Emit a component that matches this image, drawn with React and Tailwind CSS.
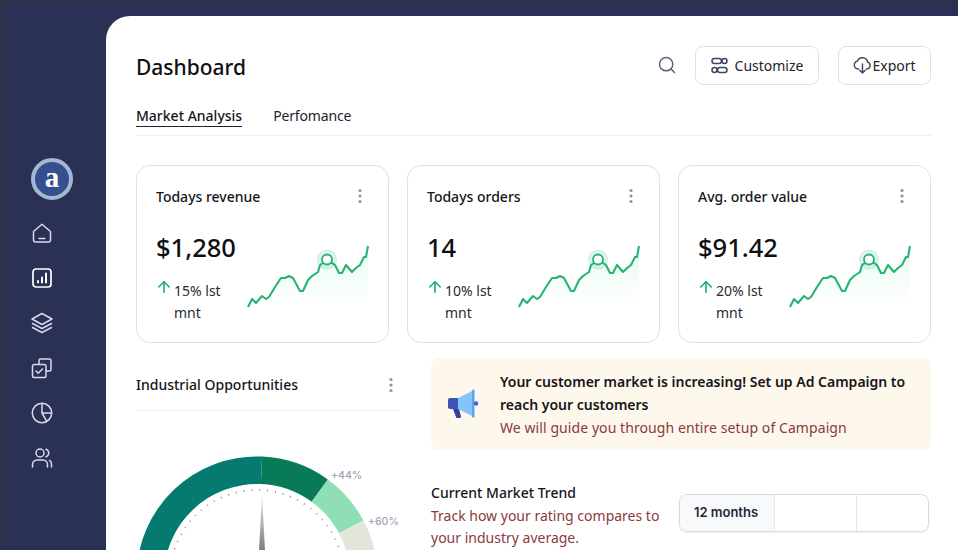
import { Search, ArrowUp } from "lucide-react";

const sparkPoints =
  "8,72 12,64 16,68 22,61 26,64 29,62 35,52 41,43 45,43 49,41 53,43 60,56 63,56 68,45 72,41 78,37 80,30 83,28 87,25 92,28 95,30 99,38 102,38 106,30 112,37 116,33 120,30 124,22 126,22 128,11";

const cards = [
  { title: "Todays revenue", value: "$1,280", delta: "15%" },
  { title: "Todays orders", value: "14", delta: "10%" },
  { title: "Avg. order value", value: "$91.42", delta: "20%" },
];

function polar(r, deg) {
  const a = (deg * Math.PI) / 180;
  return [121 + r * Math.sin(a), 166 - r * Math.cos(a)];
}

function arc(from, to) {
  const [x1, y1] = polar(120.5, from);
  const [x2, y2] = polar(120.5, to);
  const [x3, y3] = polar(93, to);
  const [x4, y4] = polar(93, from);
  return `M${x1} ${y1}A120.5 120.5 0 0 1 ${x2} ${y2}L${x3} ${y3}A93 93 0 0 0 ${x4} ${y4}Z`;
}

function Gauge() {
  const ticks = [];
  for (let d = -84; d <= 84; d += 5.2) ticks.push(d);
  return (
    <svg width="264" height="139" viewBox="0 0 264 139" className="block">
      <defs>
        <linearGradient id="needle" x1="0" y1="0" x2="0" y2="1">
          <stop offset="0" stopColor="#e5e6ea" />
          <stop offset="1" stopColor="#7d7f86" />
        </linearGradient>
      </defs>
      <path d={arc(-90, 2.4)} fill="#047a70" />
      <path d={arc(2.4, 36)} fill="#087a58" />
      <path d={arc(36, 62)} fill="#8fdfb5" />
      <path d={arc(62, 90)} fill="#e1e5da" />
      {ticks.map((d) => {
        const [x1, y1] = polar(88, d + 2.6);
        const [x2, y2] = polar(86, d + 2.6);
        return <line key={d} x1={x1} y1={y1} x2={x2} y2={y2} stroke="#8d9098" strokeWidth="1" />;
      })}
      <polygon points="126,84 123,139 129,139" fill="url(#needle)" />
      <text x="195" y="68" fontSize="10.5" fontFamily="Inter" fontWeight="500" fill="#a0a4b4">+44%</text>
      <text x="232" y="114" fontSize="10.5" fontFamily="Inter" fontWeight="500" fill="#a0a4b4">+60%</text>
    </svg>
  );
}

function Dots() {
  return (
    <svg width="4" height="16" viewBox="0 0 4 16" className="block">
      <circle cx="2" cy="2.5" r="1.6" fill="#8f93a8" />
      <circle cx="2" cy="8" r="1.6" fill="#8f93a8" />
      <circle cx="2" cy="13.5" r="1.6" fill="#8f93a8" />
    </svg>
  );
}

function Sparkline({ id }) {
  return (
    <svg width="130" height="80" viewBox="0 0 130 80" className="block shrink-0">
      <defs>
        <linearGradient id={id} x1="0" y1="0" x2="0" y2="1">
          <stop offset="0" stopColor="#e2f9ec" />
          <stop offset="1" stopColor="#ffffff" />
        </linearGradient>
      </defs>
      <polygon points={`${sparkPoints} 128,68 8,72`} fill={`url(#${id})`} opacity="0.75" />
      <polyline points={sparkPoints} fill="none" stroke="#25b473" strokeWidth="2.1" strokeLinejoin="round" />
      <circle cx="87" cy="24.500" r="9.500" fill="#25b473" fillOpacity="0.14" stroke="#25b473" strokeOpacity="0.18" />
      <circle cx="87" cy="24.500" r="5" fill="#fff" stroke="#25b473" strokeWidth="1.8" />
    </svg>
  );
}

function StatCard({ title, value, delta, id }) {
  return (
    <div className="h-[178px] rounded-[14px] border border-[#dfe1e8] pl-[19px] pr-[19px] pt-[19px]">
      <div className="flex h-[22px] items-center justify-between pr-[7px]">
        <span className="text-[14px] font-medium text-[#15151a]">{title}</span>
        <Dots />
      </div>
      <div className="flex justify-between">
        <div className="w-[90px] pt-[20px]">
          <div className="text-[25.500px] font-medium leading-[40px] text-[#0f0f14]">{value}</div>
          <div className="mt-[13px] flex text-[14px] leading-[22px] text-[#2b2b33]">
            <ArrowUp size={18} strokeWidth={2.1} className="mt-[-2px] ml-[-1px] mr-[1px] shrink-0 text-[#17ad6b]" />
            <div className="w-[60px]">
              <div>{delta} lst</div>
              <div>mnt</div>
            </div>
          </div>
        </div>
        <div className="mr-[-1px] mt-[28px]">
          <Sparkline id={id} />
        </div>
      </div>
    </div>
  );
}

function NavIcons() {
  const cls = "block";
  return (
    <div className="ml-[29px] mt-[21px] flex flex-col gap-[21px] text-[#d5daea]">
      <svg className={cls} width="24" height="24" viewBox="0 0 24 24" fill="none" stroke="currentColor" strokeWidth="1.5" strokeLinejoin="round" strokeLinecap="round">
        <path d="M3.500 10.500 12 3.200l8.500 7.300V19a2 2 0 0 1-2 2h-13a2 2 0 0 1-2-2z" />
        <path d="M9 17.500h6" />
      </svg>
      <svg className={cls} width="24" height="24" viewBox="0 0 24 24" fill="none" stroke="#ffffff" strokeWidth="1.7" strokeLinecap="round">
        <rect x="3" y="3" width="18" height="18" rx="3" />
        <path d="M8 16.500v-1.500M12 16.500v-5M16 16.500v-9" strokeWidth="2" />
      </svg>
      <svg className={cls} width="24" height="24" viewBox="0 0 24 24" fill="none" stroke="currentColor" strokeWidth="1.5" strokeLinejoin="round" strokeLinecap="round">
        <path d="M12 2.500 22 8l-10 5.500L2 8z" />
        <path d="m2.500 12.500 9.500 5 9.500-5" />
        <path d="m2.500 16.500 9.500 5 9.500-5" />
      </svg>
      <svg className={cls} width="24" height="24" viewBox="0 0 24 24" fill="none" stroke="currentColor" strokeWidth="1.5" strokeLinejoin="round" strokeLinecap="round">
        <path d="M9 8V4.500A1.500 1.500 0 0 1 10.500 3h9A1.500 1.500 0 0 1 21 4.500v9a1.500 1.500 0 0 1-1.500 1.500H16" />
        <rect x="2.500" y="8.500" width="13.500" height="13" rx="1.800" />
        <path d="m6 15 2.200 2.200L12.500 13" />
      </svg>
      <svg className={cls} width="24" height="24" viewBox="0 0 24 24" fill="none" stroke="currentColor" strokeWidth="1.5" strokeLinejoin="round" strokeLinecap="round">
        <circle cx="12" cy="12" r="9.700" />
        <path d="M12 2.500V12l4.800 8.300M12 12h9.500" />
      </svg>
      <svg className={cls} width="24" height="24" viewBox="0 0 24 24" fill="none" stroke="currentColor" strokeWidth="1.5" strokeLinejoin="round" strokeLinecap="round">
        <circle cx="10" cy="7" r="4" />
        <path d="M2.500 21v-2.500A4.500 4.500 0 0 1 7 14h6a4.500 4.500 0 0 1 4.500 4.500V21" />
        <path d="M16 3.200a4 4 0 0 1 0 7.600M19.500 14.300a4.500 4.500 0 0 1 2 3.700V21" />
      </svg>
    </div>
  );
}

function Megaphone() {
  return (
    <svg width="32" height="30" viewBox="0 0 32 30" className="block shrink-0">
      <path d="M6 20h6l2 7.500a1.500 1.500 0 0 1-1.500 1.500h-2a1.500 1.500 0 0 1-1.500-1z" fill="#34409b" />
      <rect x="1" y="9" width="11" height="11" rx="2" fill="#3f51b5" />
      <path d="M11 9 25 2v25l-14-7z" fill="#85c4fb" />
      <rect x="25" y="0.500" width="2.500" height="28" rx="1.200" fill="#5aa5ee" />
      <circle cx="29" cy="14.500" r="2.200" fill="#3f64c9" />
    </svg>
  );
}

export default function App() {
  return (
    <div
      className="flex h-[550px] w-[958px] overflow-hidden border-l border-t border-[#333333] bg-[#2a3154] text-[#111116]"
      style={{ fontFamily: '"Noto Sans", sans-serif' }}
    >
      <aside className="w-[105px] shrink-0 pt-[157px]">
        <div className="ml-[30px] flex h-[42px] w-[42px] items-center justify-center rounded-full border-[4px] border-[#a4b8d6] bg-[#36508f]">
          <span className="mt-[-3px] text-[29px] font-bold leading-none text-white" style={{ fontFamily: '"Liberation Serif", serif' }}>a</span>
        </div>
        <NavIcons />
      </aside>

      <main className="mt-[15px] min-w-0 flex-1 rounded-tl-[24px] bg-white pl-[30px] pr-[27px] pt-[30px]">
        <header className="flex h-[40px] items-center justify-between">
          <h1 className="mt-[2px] text-[21px] font-medium leading-none text-[#0f0f14]">Dashboard</h1>
          <div className="mb-[2px] flex items-center">
            <Search size={20} strokeWidth={1.8} className="mr-[18px] text-[#5b6478]" />
            <button className="flex h-[39px] w-[124px] items-center justify-center gap-[7px] rounded-[8px] border border-[#dfe1e8] text-[14px] text-[#23232b]">
              <svg width="17" height="17" viewBox="0 0 17 17" fill="none" stroke="#3d465c" strokeWidth="1.5">
                <rect x="1" y="1.500" width="9.500" height="5" rx="2.500" />
                <circle cx="13.500" cy="4" r="2.500" />
                <circle cx="3.500" cy="13" r="2.500" />
                <rect x="6.500" y="10.500" width="9.500" height="5" rx="2.500" />
              </svg>
              Customize
            </button>
            <button className="ml-[19px] flex h-[39px] w-[93px] items-center justify-center rounded-[8px] border border-[#dfe1e8] text-[14px] text-[#23232b]">
              <svg width="19" height="18" viewBox="0 0 19 18" fill="none" stroke="#3d465c" strokeWidth="1.4" strokeLinecap="round" strokeLinejoin="round">
                <path d="M5.500 13H5a4 4 0 0 1-.5-7.900A5.300 5.300 0 0 1 14.600 6 3.600 3.600 0 0 1 14 13h-.5" />
                <path d="M9.500 8v9M6.800 14.300l2.700 2.700 2.700-2.700" />
              </svg>
              Export
            </button>
          </div>
        </header>

        <nav className="mt-[18px] flex h-[32px] gap-[31px] border-b border-[#eceef2] text-[14px]">
          <span className="h-[23px] border-b border-[#22222a] font-medium leading-[24px] text-[#15151a]">Market Analysis</span>
          <span className="tracking-[-0.15px] leading-[24px] text-[#23232b]">Perfomance</span>
        </nav>

        <section className="mt-[29px] grid grid-cols-3 gap-[18px]">
          {cards.map((c, i) => (
            <StatCard key={c.title} {...c} id={`spark${i}`} />
          ))}
        </section>

        <section className="mt-[15px] flex gap-[31px]">
          <div className="w-[264px] shrink-0">
            <div className="flex h-[53px] items-center justify-between border-b border-[#eceef2] pr-[7px] pt-[1px]">
              <span className="text-[14px] font-medium text-[#15151a]">Industrial Opportunities</span>
              <Dots />
            </div>
            <Gauge />
          </div>

          <div className="min-w-0 flex-1">
            <div className="flex h-[92px] items-center gap-[21px] rounded-[8px] bg-[#fdf7ec] pl-[16px] pr-[16px]">
              <Megaphone />
              <div className="text-[14px] leading-[23px]">
                <p className="font-semibold text-[#15151a]">Your customer market is increasing! Set up Ad Campaign to reach your customers</p>
                <p className="tracking-[0.08px] text-[#8a3a3f]">We will guide you through entire setup of Campaign</p>
              </div>
            </div>
            <div className="mt-[32px] flex justify-between">
              <div className="w-[240px] text-[14px] leading-[22.500px]">
                <p className="font-medium text-[#15151a]">Current Market Trend</p>
                <p className="text-[#8a3a3f]">Track how your rating compares to your industry average.</p>
              </div>
              <div className="mr-[2px] mt-[12px] flex h-[38px] w-[250px] overflow-hidden rounded-[8px] border border-[#d5dae3] shadow-[0_1px_2px_rgba(16,24,40,0.06)]">
                <div className="flex w-[95px] items-center justify-center border-r border-[#e5e8ee] bg-[#f8f9fb] pr-[2px] text-[13px] font-semibold text-[#1f2937]" style={{ fontFamily: "Inter, sans-serif" }}>12 months</div>
                <div className="w-[82px] border-r border-[#e5e8ee]" />
                <div className="flex-1" />
              </div>
            </div>
          </div>
        </section>
      </main>
    </div>
  );
}
